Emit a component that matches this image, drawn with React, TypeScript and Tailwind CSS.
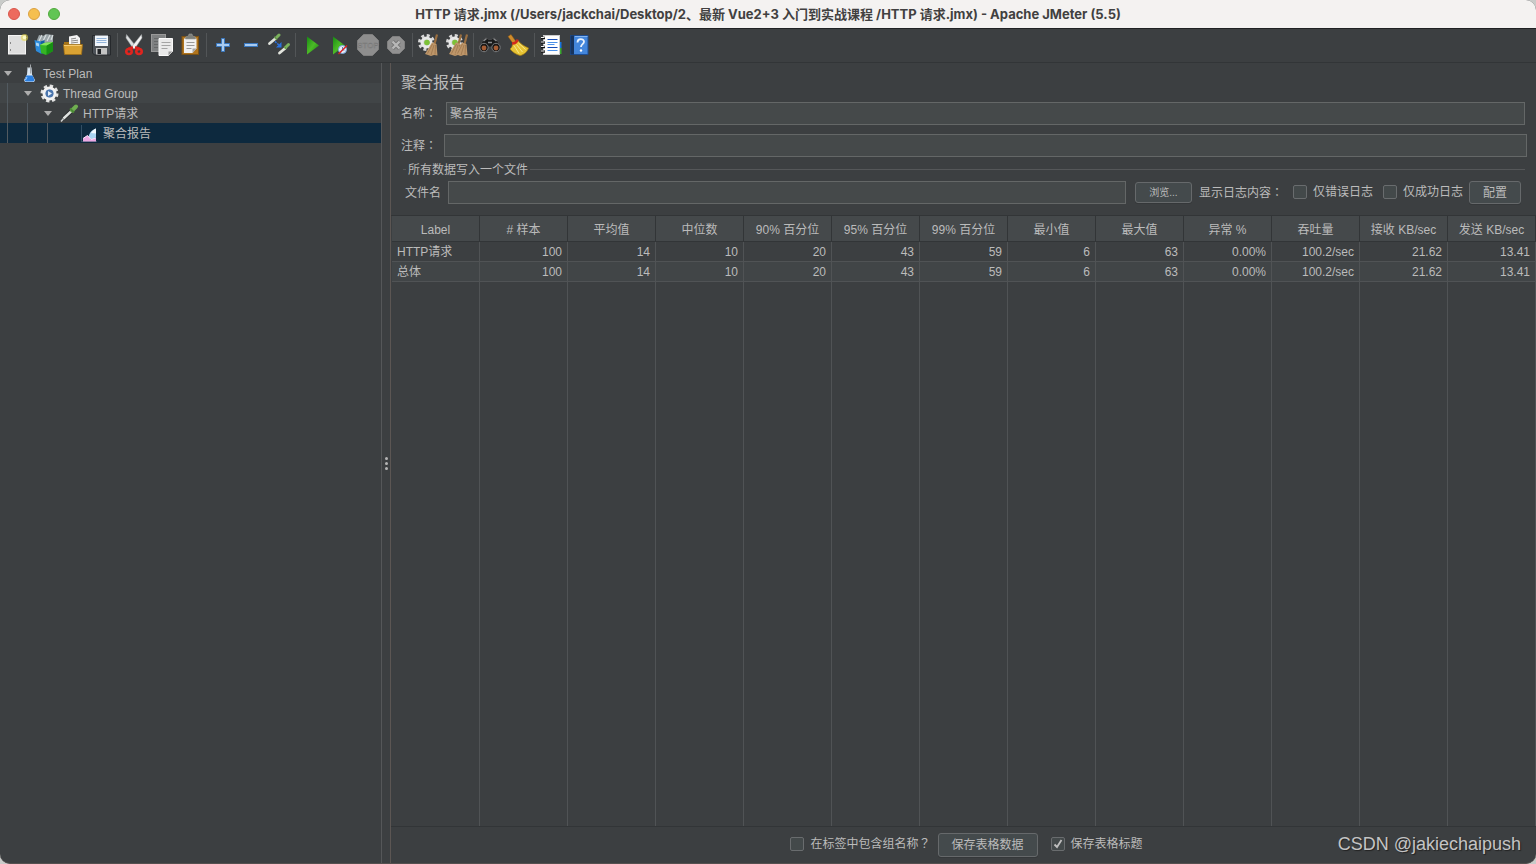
import type { ReactNode } from "react";
import clsx from "clsx";

const CJK_PUNCT = "font-['Noto_Sans_CJK_TC',sans-serif] leading-none";

/* ---------- Toolbar icons ---------- */

function Icon({ children }: { children: ReactNode }) {
    return (
        <svg width="24" height="24" viewBox="0 0 24 24" aria-hidden="true">
            {children}
        </svg>
    );
}

function NewIcon() {
    return (
        <Icon>
            <rect x="3.5" y="2.5" width="17" height="18.5" fill="#dedede" stroke="#f4f4f4" />
            <path d="M5.5 9v2M5.5 16v2" stroke="#888" />
            <circle cx="19.5" cy="4.500" r="3.6" fill="#e8d84e" opacity=".6" />
            <circle cx="19.5" cy="4.500" r="1.8" fill="#fdfbc8" />
        </Icon>
    );
}

function TemplatesIcon() {
    return (
        <Icon>
            <path d="M4 7l2-5 4 1 3-2 7 1v7l-8 4-8-2z" fill="#9aa4a8" />
            <path d="M6 8l3-6M10 8l3-6M14 8l3-6M18 7l2-5" stroke="#d8dddf" strokeWidth="1.200" />
            <path d="M1.500 7l6 1.500 1 2V21L3 18z" fill="#2d8bdc" />
            <path d="M7.500 8.500l4-1.500v13l-3 1z" fill="#155fa5" />
            <path d="M3 9.500l3 1v3l-3-1z" fill="#a6d5f7" />
            <path d="M7 12l4-2 9-1v9l-7 4-5-2z" fill="#35b524" />
            <path d="M13.500 12.500l6.500-3.500v9l-6.500 4z" fill="#179014" />
            <path d="M7 12l4-2 9-1-6.500 3.500z" fill="#86e45c" />
        </Icon>
    );
}

function OpenIcon() {
    return (
        <Icon>
            <path d="M3 9h6l1-2h9.500v13H3z" fill="#a87518" />
            <path d="M8 3.500l8-1.500 3 3v8H8z" fill="#f4f4f4" />
            <path d="M10 6l5-.8M10 8l7-.8M10 10l7-.8" stroke="#8a8a8a" />
            <path d="M2.500 11.500h19L20.500 21.500H3.500z" fill="#d9a233" stroke="#9f7018" strokeWidth=".8" />
            <path d="M3 12.500h17.500" stroke="#f5cb72" />
        </Icon>
    );
}

function SaveIcon() {
    return (
        <Icon>
            <path d="M3.500 2.500h18v19.500H5.500l-2-2z" fill="#4d5258" stroke="#26292c" />
            <rect x="6" y="2.500" width="13" height="10.500" fill="#f0f5fb" />
            <path d="M7.500 5.500h10M7.500 7.500h10M7.500 9.500h10" stroke="#93b4da" />
            <rect x="7" y="15" width="11" height="6.500" fill="#c4c4c4" />
            <rect x="8.500" y="16" width="3.500" height="5" fill="#202327" />
        </Icon>
    );
}

function CutIcon() {
    return (
        <Icon>
            <path d="M4.500 1.500L14.500 14l-3 2L4 5z" fill="#dcdfe0" stroke="#9b9ea0" strokeWidth=".5" />
            <path d="M19.500 1.500L9.500 14l3 2L20 5z" fill="#f2f2f2" stroke="#9b9ea0" strokeWidth=".5" />
            <path d="M11 14.500l-4.500 1.500M13 14.500l4.500 1.500" stroke="#d8201d" strokeWidth="3" />
            <ellipse cx="7" cy="18.500" rx="2.700" ry="2.500" fill="none" stroke="#e0251f" strokeWidth="2.600" />
            <ellipse cx="17" cy="18.500" rx="2.700" ry="2.500" fill="none" stroke="#e0251f" strokeWidth="2.600" />
        </Icon>
    );
}

function CopyIcon() {
    return (
        <Icon>
            <rect x="1.500" y="1.500" width="14" height="17" fill="#7f8182" stroke="#999" />
            <path d="M4 5.500h8M4 8.500h4M4 11.500h4M4 14.500h4" stroke="#666869" />
            <path d="M9 5.500h13.500v13l-4 4H9z" fill="#e9e9e9" stroke="#fafafa" />
            <path d="M11.500 9.500h9M11.500 12.500h9M11.500 15.500h6" stroke="#a4a4a4" />
            <path d="M22.500 18.500h-4v4z" fill="#999" />
        </Icon>
    );
}

function PasteIcon() {
    return (
        <Icon>
            <rect x="4" y="3.500" width="16.500" height="18" fill="#b0741d" stroke="#7a5114" />
            <path d="M6 5.500h12.500v10l-4 4.500H6z" fill="#f0f0f0" />
            <path d="M8.500 9.500h8M8.500 12.500h8M8.500 15.500h5" stroke="#999" />
            <path d="M18.500 15.500h-4V20z" fill="#a6a6a6" />
            <path d="M7.500 6V4l3-1 .5-2h3l.5 2 3 1v2z" fill="#7c7f7b" stroke="#989b96" strokeWidth=".6" />
        </Icon>
    );
}

function AddIcon() {
    return (
        <Icon>
            <path d="M10.500 5.500h3v5h5v3h-5v5h-3v-5h-5v-3h5z" fill="#a9cbf0" stroke="#3a78bf" />
        </Icon>
    );
}

function RemoveIcon() {
    return (
        <Icon>
            <rect x="5.500" y="10.500" width="13" height="3" fill="#a9cbf0" stroke="#3a78bf" />
        </Icon>
    );
}

function ToggleIcon() {
    return (
        <Icon>
            <path d="M2.500 10.500l6-5" stroke="#e2e4dd" strokeWidth="2.800" strokeLinecap="round" />
            <path d="M9 5l3-3" stroke="#7bb15c" strokeWidth="3" strokeLinecap="round" />
            <path d="M7.500 3.500l2.500 3" stroke="#5a9040" />
            <path d="M12.500 20l6-5" stroke="#e2e4dd" strokeWidth="2.800" strokeLinecap="round" />
            <path d="M18.500 14.500l3-3" stroke="#7bb15c" strokeWidth="3" strokeLinecap="round" />
            <path d="M17 13l2.500 3" stroke="#5a9040" />
            <path d="M8 8.500l4.500 4" stroke="#2b73e2" strokeWidth="1.500" strokeDasharray="2 1" />
            <path d="M14.500 9v5.500H9z" fill="#2b73e2" />
        </Icon>
    );
}

function PlayGradient({ id }: { id: string }) {
    return (
        <linearGradient id={id} x1="0" y1="0" x2="1" y2="1">
            <stop offset="0" stopColor="#178b13" />
            <stop offset=".5" stopColor="#4cba27" />
            <stop offset="1" stopColor="#147c10" />
        </linearGradient>
    );
}

function StartIcon() {
    return (
        <Icon>
            <PlayGradient id="start" />
            <path d="M7 3.500L19 12.500 7 21.500z" fill="url(#start)" />
        </Icon>
    );
}

function StartNoTimersIcon() {
    return (
        <Icon>
            <PlayGradient id="startNoTimers" />
            <path d="M5 3.500L17 12.500 5 21.500z" fill="url(#startNoTimers)" />
            <circle cx="14.500" cy="16.500" r="4" fill="#e7eef8" stroke="#79a5dc" />
            <path d="M14.500 14v3h2" fill="none" stroke="#5a85b8" />
            <path d="M10.500 21L19 12.500" stroke="#dc2222" strokeWidth="1.500" />
        </Icon>
    );
}

function StopIcon() {
    return (
        <Icon>
            <path d="M7.500 1.500h9l6 6v9l-6 6h-9l-6-6v-9z" fill="#8e8e8e" stroke="#7f7f7f" />
            <text x="12" y="15" textAnchor="middle" fontSize="8" fontFamily="Liberation Sans, sans-serif" fill="#a9a9a9" stroke="#777" strokeWidth=".5">STOP</text>
        </Icon>
    );
}

function ShutdownIcon() {
    return (
        <Icon>
            <path d="M8.500 3.500h7l5 5v7l-5 5h-7l-5-5v-7z" fill="#919191" stroke="#808080" />
            <path d="M8.500 8.500l7 7M15.500 8.500l-7 7" stroke="#747474" strokeWidth="4" />
            <path d="M8.500 8.500l7 7M15.500 8.500l-7 7" stroke="#b8b8b8" strokeWidth="2.400" />
        </Icon>
    );
}

function Gear() {
    return (
        <>
            <circle cx="9.500" cy="9.500" r="7" fill="none" stroke="#d8d8d8" strokeWidth="3" strokeDasharray="3 2.500" />
            <circle cx="9.500" cy="9.500" r="4.500" fill="#c9cdc6" stroke="#e8e8e8" strokeWidth="3" />
            <circle cx="10" cy="9.500" r="2.800" fill="#7cc137" />
        </>
    );
}

function SmallBroom({ x = 0 }: { x?: number }) {
    return (
        <g transform={`translate(${x} 0)`}>
            <path d="M20 1.500L17.500 11" stroke="#9a6f40" strokeWidth="2.200" />
            <path d="M15 9.500l4.500 1.500 1 11.500-3.500-.5-3 1-6-2z" fill="#be9669" />
            <path d="M15.500 11l-5 9.500M17 12l-3 10M18.500 12l-.5 9.500" stroke="#8f6a43" strokeWidth=".6" />
        </g>
    );
}

function ClearIcon() {
    return (
        <Icon>
            <Gear />
            <SmallBroom />
        </Icon>
    );
}

function ClearAllIcon() {
    return (
        <Icon>
            <Gear />
            <SmallBroom x={-4} />
            <SmallBroom x={2} />
        </Icon>
    );
}

function SearchIcon() {
    return (
        <Icon>
            <path d="M5.500 6L8 4.500l2.500 2h3l2.500-2L18.500 6l4 8-1 4-5 1-2.500-5h-4l-2.500 5-5-1-1-4z" fill="#191a1a" stroke="#55585a" strokeWidth=".6" />
            <path d="M5.500 8l3-2.500M18.500 8l-3-2.500M10 9.500h4" stroke="#8a8d8f" strokeWidth="1.500" />
            <circle cx="6" cy="14.500" r="4.200" fill="#1b1817" stroke="#777b7d" />
            <circle cx="18" cy="14.500" r="4.200" fill="#1b1817" stroke="#777b7d" />
            <circle cx="6" cy="15" r="2.400" fill="#a65e35" />
            <circle cx="18" cy="15" r="2.400" fill="#a65e35" />
        </Icon>
    );
}

function ResetSearchIcon() {
    return (
        <Icon>
            <path d="M2 3.500L5 1.500l5 7-3 2z" fill="#d08c2b" stroke="#8d5b16" strokeWidth=".5" />
            <path d="M12 7.500c2 3 6 5.500 10.500 7.500-1 3.500-4.500 7-8.500 7.500-4-1-7.500-3.500-10-6.500 2-1.500 2.500-3.500 2.500-5.500z" fill="#e6c334" stroke="#a57d11" strokeWidth=".7" />
            <path d="M8 12.500l5 8M10.500 11.500l6 7.500M12.500 10l7 6.500" stroke="#f8ea92" strokeWidth=".9" />
            <path d="M6 10.500c3 0 5-1.500 5.500-4" fill="none" stroke="#d02a1d" strokeWidth="2.400" />
        </Icon>
    );
}

function FunctionHelperIcon() {
    return (
        <Icon>
            <rect x="17" y="9" width="5.500" height="6" fill="#1775df" />
            <rect x="17" y="15" width="5.500" height="6" fill="#38a92d" />
            <rect x="4.500" y="2.500" width="16" height="19" fill="#fff" stroke="#ccc" />
            <path d="M8.500 6.500h10M8.500 14.500h10" stroke="#174cb4" />
            <path d="M8.500 9.500h10M8.500 11.500h7M8.500 17.500h10" stroke="#4b91e8" />
            <path d="M2 5h4M2 9.500h4M2 14h4M2 18.500h4" stroke="#111" strokeWidth="2.500" />
            <path d="M2 4.500h3.500M2 9h3.500M2 13.500h3.500M2 18h3.500" stroke="#eee" strokeWidth="1.200" />
        </Icon>
    );
}

function HelpIcon() {
    return (
        <Icon>
            <path d="M3.500 2.500h17.500v19H3.500z" fill="#4386dc" stroke="#1d4e95" />
            <path d="M3.500 2.500H7v19H3.500z" fill="#17345e" />
            <path d="M8 3.500h12.500" stroke="#85b5ef" />
            <path d="M10.500 9.500c0-4.500 6.500-4 6.500-.8 0 2.500-3 2.500-3 5.300" fill="none" stroke="#e8f1fc" strokeWidth="1.800" />
            <circle cx="14" cy="17.500" r="1.200" fill="#fff" />
        </Icon>
    );
}

/* ---------- Tree icons ---------- */

function TreeIcon({ children }: { children: ReactNode }) {
    return (
        <svg width="20" height="20" viewBox="0 0 20 20" aria-hidden="true">
            {children}
        </svg>
    );
}

function FlaskIcon() {
    return (
        <TreeIcon>
            <path d="M8.500 5h4l.5 6.500 3 5.500-1 2H6l-1-2 3-5.500z" fill="#dbe7f2" />
            <path d="M7.500 12.500h6L15.500 17l-1 1.500h-8L5.500 17z" fill="#2b7fe0" />
            <path d="M8 14l-1.500 3" stroke="#a9d2ff" />
            <path d="M8 5l4.500-.5M11.500 1.500v9" stroke="#a3a8ac" />
        </TreeIcon>
    );
}

function ThreadGroupIcon() {
    return (
        <TreeIcon>
            <circle cx="10.500" cy="10.500" r="7.500" fill="none" stroke="#e2e2e2" strokeWidth="3" strokeDasharray="3.300 2.590" />
            <circle cx="10.500" cy="10.500" r="5.500" fill="#5b83b8" stroke="#f2f2f2" strokeWidth="3" />
            <circle cx="10.500" cy="10.500" r="3.800" fill="#4b76ae" />
            <path d="M9 8L13 10.500l-4 2.500z" fill="#e3eefb" />
        </TreeIcon>
    );
}

function PipetteIcon() {
    return (
        <TreeIcon>
            <path d="M2 18.500L5 15" stroke="#cfd2d2" strokeWidth="1.500" />
            <path d="M4.500 15.500l8-7.500" stroke="#26282a" strokeWidth="4" />
            <path d="M4.500 15.500l8-7.500" stroke="#dfe2e0" strokeWidth="2.400" />
            <path d="M13 7.500l4-4" stroke="#6fae50" strokeWidth="4" strokeLinecap="round" />
            <path d="M11 5.500l4 4" stroke="#4a8935" strokeWidth="1.800" />
        </TreeIcon>
    );
}

function ReportIcon() {
    return (
        <TreeIcon>
            <path d="M2.500 2.500v16H18" fill="none" stroke="#59758b" strokeDasharray="1 1" />
            <path d="M9.500 15c0-4 3-8 7.500-9.500v9l-4 2.500z" fill="#a9d4f2" />
            <path d="M12 10c1-2 2.500-3.500 5-4.500v5z" fill="#f2f9fe" />
            <path d="M4 18.500v-3l4.500-3 3.500 4 5-1.500v3.500z" fill="#eda9e4" />
            <path d="M4 15.500l4.500-3 3.500 4 5-1.500" fill="none" stroke="#fbe4f8" />
        </TreeIcon>
    );
}

/* ---------- Window parts ---------- */

const toolbarGroups: { label: string; icon: ReactNode; disabled?: boolean }[][] = [
    [
        { label: "新建", icon: <NewIcon /> },
        { label: "模板", icon: <TemplatesIcon /> },
        { label: "打开", icon: <OpenIcon /> },
        { label: "保存", icon: <SaveIcon /> },
    ],
    [
        { label: "剪切", icon: <CutIcon /> },
        { label: "复制", icon: <CopyIcon /> },
        { label: "粘贴", icon: <PasteIcon /> },
    ],
    [
        { label: "展开全部", icon: <AddIcon /> },
        { label: "折叠全部", icon: <RemoveIcon /> },
        { label: "切换", icon: <ToggleIcon /> },
    ],
    [
        { label: "启动", icon: <StartIcon /> },
        { label: "不停顿开始", icon: <StartNoTimersIcon /> },
        { label: "停止", icon: <StopIcon />, disabled: true },
        { label: "关闭", icon: <ShutdownIcon />, disabled: true },
    ],
    [
        { label: "清除", icon: <ClearIcon /> },
        { label: "清除全部", icon: <ClearAllIcon /> },
    ],
    [
        { label: "查找", icon: <SearchIcon /> },
        { label: "重置搜索", icon: <ResetSearchIcon /> },
    ],
    [
        { label: "函数助手", icon: <FunctionHelperIcon /> },
        { label: "帮助", icon: <HelpIcon /> },
    ],
];

const treeNodes = [
    { name: "Test Plan", icon: <FlaskIcon />, open: true },
    { name: "Thread Group", icon: <ThreadGroupIcon />, open: true },
    { name: "HTTP请求", icon: <PipetteIcon />, open: true },
    { name: "聚合报告", icon: <ReportIcon />, open: false },
];

const columns = [
    "Label", "# 样本", "平均值", "中位数", "90% 百分位", "95% 百分位", "99% 百分位",
    "最小值", "最大值", "异常 %", "吞吐量", "接收 KB/sec", "发送 KB/sec",
];

const rows = [
    ["HTTP请求", "100", "14", "10", "20", "43", "59", "6", "63", "0.00%", "100.2/sec", "21.62", "13.41"],
    ["总体", "100", "14", "10", "20", "43", "59", "6", "63", "0.00%", "100.2/sec", "21.62", "13.41"],
];

function TitleBar() {
    return (
        <header className="flex h-7 shrink-0 items-center bg-[#f4f2f1] px-2">
            <div className="flex w-20 gap-2">
                <button aria-label="Close" className="size-3 rounded-full border border-[#d9564c] bg-[#ed6a5e]" />
                <button aria-label="Minimize" className="size-3 rounded-full border border-[#dba141] bg-[#f5bf4f]" />
                <button aria-label="Zoom" className="size-3 rounded-full border border-[#51aa3d] bg-[#61c554]" />
            </div>
            <h1 className="flex-1 text-center font-[Inter,'Noto_Sans_CJK_SC',sans-serif] text-[13px] font-bold text-[#414040]">
                HTTP 请求.jmx (/Users/jackchai/Desktop/2、最新 Vue2+3 入门到实战课程 /HTTP 请求.jmx) - Apache JMeter (5.5)
            </h1>
            <div className="w-20" />
        </header>
    );
}

function Toolbar() {
    return (
        <nav className="flex h-[35px] shrink-0 items-center border-t border-b border-t-[#1f2123] border-b-[#323537] px-[3px] pb-[2px]">
            {toolbarGroups.map((group, i) => (
                <div key={i} className="flex items-center">
                    {i > 0 && (
                        <div className="flex w-[5px] justify-center">
                            <div className="h-6 w-px bg-[#525557]" />
                        </div>
                    )}
                    {group.map((item) => (
                        <button
                            key={item.label}
                            aria-label={item.label}
                            disabled={item.disabled}
                            className="flex size-7 items-center justify-center"
                        >
                            {item.icon}
                        </button>
                    ))}
                </div>
            ))}
        </nav>
    );
}

function TestTree() {
    return (
        <aside role="tree" className="w-[382px] shrink-0 border-r border-[#555759]">
            {treeNodes.map((node, depth) => (
                <div
                    key={node.name}
                    role="treeitem"
                    aria-level={depth + 1}
                    aria-selected={depth === 3}
                    className={clsx(
                        "flex h-5 items-center",
                        depth === 1 && "bg-[#414547]",
                        depth === 3 && "bg-[#0d293e]"
                    )}
                >
                    {treeNodes.slice(0, depth).map((parent) => (
                        <span key={parent.name} className="h-5 w-5 pl-[7px]">
                            <span className="block h-5 w-px bg-[#525a60]" />
                        </span>
                    ))}
                    <span className="flex w-4 justify-center">
                        {node.open && (
                            <svg width="8" height="5" viewBox="0 0 8 5" aria-hidden="true">
                                <path d="M0 0h8L4 5z" fill="#adadad" />
                            </svg>
                        )}
                    </span>
                    <span className="ml-[3px] mr-1">{node.icon}</span>
                    <span className="pt-[2px]">{node.name}</span>
                </div>
            ))}
        </aside>
    );
}

function Divider() {
    return (
        <div className="flex w-[9px] shrink-0 flex-col items-center justify-center gap-[2px] border-r border-[#5c5653]">
            <span className="size-[3px] rounded-full bg-[#b5b5b5]" />
            <span className="size-[3px] rounded-full bg-[#b5b5b5]" />
            <span className="size-[3px] rounded-full bg-[#b5b5b5]" />
        </div>
    );
}

const fieldClass = "min-w-0 flex-1 border border-[#646767] bg-[#45494a] px-[3px] pb-[2px] outline-none";
const buttonClass = "rounded-[3px] border border-[#66696b] bg-[#444a4c] shadow-[0_1px_0_#35383a]";

function CheckBox({ checked, children }: { checked?: boolean; children: ReactNode }) {
    return (
        <label className="flex items-center gap-[6px] pb-[2px]">
            <span className="grid size-[14px] place-items-center">
                <input
                    type="checkbox"
                    defaultChecked={checked}
                    className="peer col-start-1 row-start-1 size-[14px] appearance-none rounded-[2px] border border-[#696c6e] bg-[#43494a]"
                />
                <svg
                    width="10"
                    height="10"
                    viewBox="0 0 10 10"
                    className="pointer-events-none invisible col-start-1 row-start-1 peer-checked:visible"
                    aria-hidden="true"
                >
                    <path d="M1.500 5.500L4 8l4.500-7" fill="none" stroke="#bfbfbf" strokeWidth="1.800" />
                </svg>
            </span>
            <span>{children}</span>
        </label>
    );
}

function ReportForm() {
    return (
        <section className="shrink-0 pt-2">
            <h2 className="px-[10px] text-base leading-6">聚合报告</h2>

            <div className="mt-[7px] flex items-center pl-[10px] pr-[11px]">
                <label htmlFor="name" className="w-[45px]">名称<span className={CJK_PUNCT}>：</span></label>
                <input id="name" type="text" defaultValue="聚合报告" className={clsx(fieldClass, "h-[23px]")} />
            </div>

            <div className="mt-[9px] flex items-center pl-[10px] pr-[9px]">
                <label htmlFor="comment" className="w-[43px]">注释<span className={CJK_PUNCT}>：</span></label>
                <input id="comment" type="text" className={clsx(fieldClass, "h-[23px]")} />
            </div>

            <div className="mt-1 flex h-4 items-center gap-[2px] pl-3 pr-[11px]">
                <span className="h-px w-[3px] bg-[#555759]" />
                <span id="file-group" className="pt-[2px]">所有数据写入一个文件</span>
                <span className="h-px flex-1 bg-[#555759]" />
            </div>

            <div role="group" aria-labelledby="file-group" className="mt-1 mb-[11px] flex items-center pl-[14px] pr-[15px]">
                <label htmlFor="filename" className="w-[43px]">文件名</label>
                <input id="filename" type="text" className={clsx(fieldClass, "h-[23px]")} />
                <button className={clsx(buttonClass, "ml-[9px] h-[21px] w-[57px] text-[10px] leading-none")}>浏览...</button>
                <span className="ml-[7px] mr-[10px]">显示日志内容<span className={CJK_PUNCT}>：</span></span>
                <div className="flex gap-[10px]">
                    <CheckBox>仅错误日志</CheckBox>
                    <CheckBox>仅成功日志</CheckBox>
                </div>
                <button className={clsx(buttonClass, "ml-[6px] h-[23px] w-[52px]")}>配置</button>
            </div>
        </section>
    );
}

function ReportTable() {
    return (
        <div className="min-h-0 flex-1 border-t border-[#323537] pl-px">
            <table className="h-full w-full table-fixed border-separate border-spacing-0">
                <thead>
                    <tr className="h-[26px] bg-[#45494b]">
                        {columns.map((column) => (
                            <th
                                key={column}
                                className="whitespace-nowrap border-r border-b border-[#323537] px-0 pt-[2px] pb-0 font-normal"
                            >
                                {column}
                            </th>
                        ))}
                    </tr>
                </thead>
                <tbody>
                    {rows.map((row, i) => (
                        <tr key={row[0]} className={clsx("h-5", i % 2 === 1 && "bg-[#414547]")}>
                            {row.map((cell, j) => (
                                <td
                                    key={j}
                                    className="border-r border-b border-[#505355] px-[5px] py-0 text-right first:text-left"
                                >
                                    {cell}
                                </td>
                            ))}
                        </tr>
                    ))}
                    {/* Empty rest of the grid */}
                    <tr>
                        {columns.map((column) => (
                            <td key={column} className="border-r border-[#505355] p-0" />
                        ))}
                    </tr>
                </tbody>
            </table>
        </div>
    );
}

function ReportFooter() {
    return (
        <footer className="flex h-[37px] shrink-0 items-center justify-center border-t border-[#323537] pl-[6px]">
            <CheckBox>在标签中包含组名称<span className={CJK_PUNCT}>？</span></CheckBox>
            <button className={clsx(buttonClass, "ml-[7px] mr-[13px] h-6 w-[100px]")}>保存表格数据</button>
            <CheckBox checked>保存表格标题</CheckBox>
        </footer>
    );
}

function App() {
    return (
        <div className="h-screen bg-[#c9cbc9]">
            <div className="relative flex h-full flex-col overflow-hidden rounded-[10px] border-b border-[#55504f] bg-[#3c3f41] font-['Liberation_Sans','Noto_Sans_CJK_SC',sans-serif] text-[12px] leading-4 text-[#bbbbbb]">
                <TitleBar />
                <Toolbar />
                <div className="flex min-h-0 flex-1">
                    <TestTree />
                    <Divider />
                    <main className="flex min-w-0 flex-1 flex-col">
                        <ReportForm />
                        <ReportTable />
                        <ReportFooter />
                    </main>
                </div>

                {/* Watermark */}
                <div className="pointer-events-none absolute right-[15px] bottom-[7px] text-[18px] leading-6 text-[#c4c4c4] [text-shadow:1px_1px_1px_#222]">
                    CSDN @jakiechaipush
                </div>
            </div>
        </div>
    );
}

export default App;
